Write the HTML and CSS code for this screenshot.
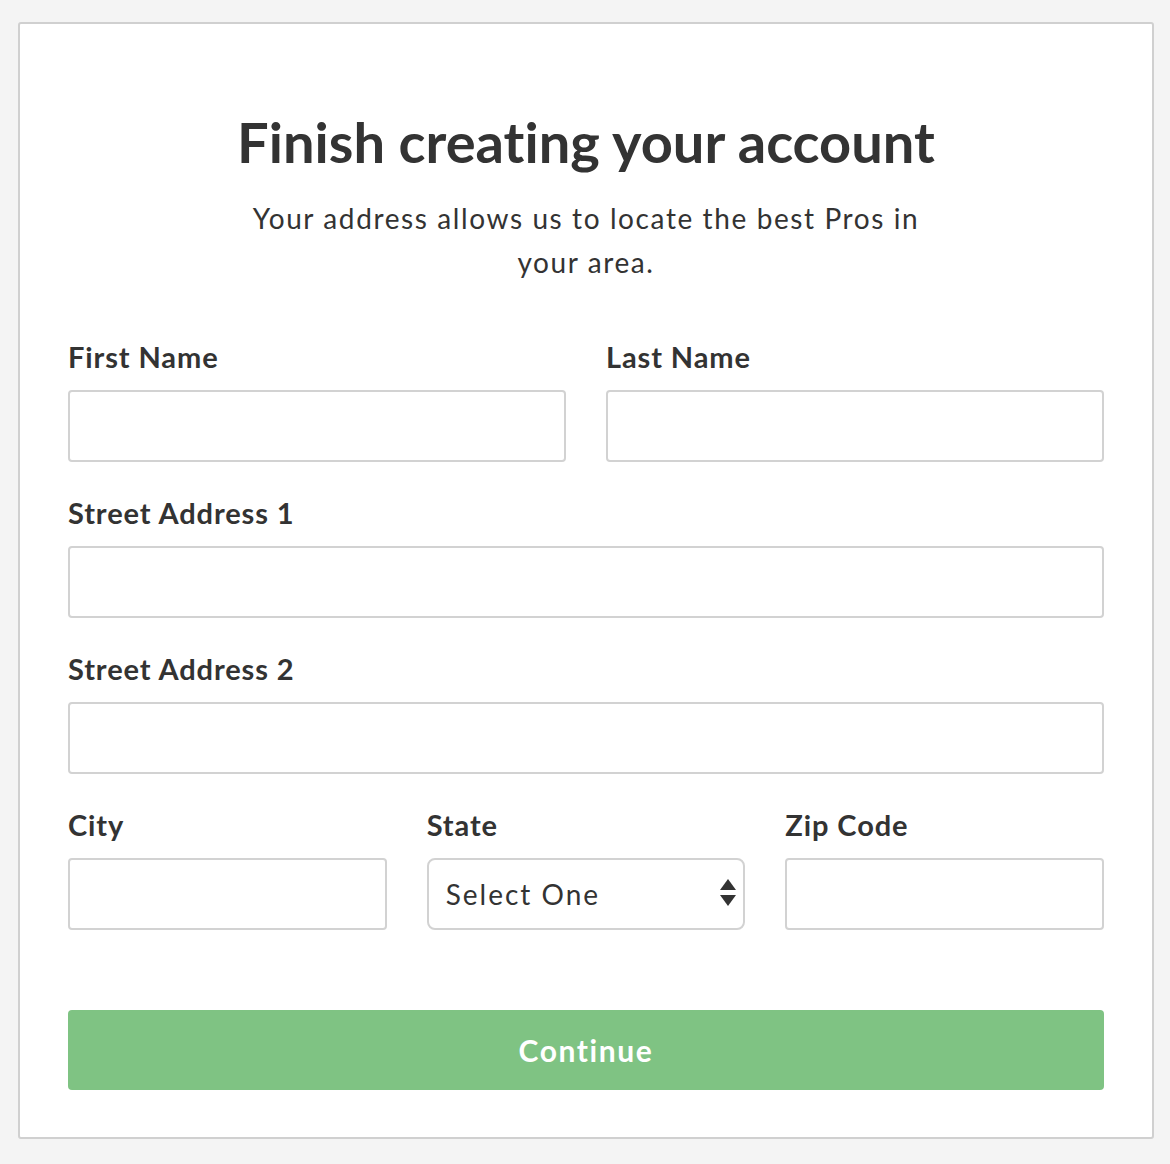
FILE: index.html
```html
<!DOCTYPE html>
<html lang="en">
<head>
<meta charset="utf-8">
<title>Finish creating your account</title>
<link rel="stylesheet" href="styles.css">
</head>
<body>
<main class="card">
  <h1 class="title">Finish creating your account</h1>
  <p class="subtitle">Your address allows us to locate the best Pros in your area.</p>
  <form class="form">
    <div class="row">
      <div class="field">
        <label class="label" for="fn">First Name</label>
        <input class="input" id="fn" type="text">
      </div>
      <div class="field">
        <label class="label" for="ln">Last Name</label>
        <input class="input" id="ln" type="text">
      </div>
    </div>
    <div class="row">
      <div class="field">
        <label class="label" for="a1">Street Address 1</label>
        <input class="input" id="a1" type="text">
      </div>
    </div>
    <div class="row">
      <div class="field">
        <label class="label" for="a2">Street Address 2</label>
        <input class="input" id="a2" type="text">
      </div>
    </div>
    <div class="row">
      <div class="field">
        <label class="label" for="city">City</label>
        <input class="input" id="city" type="text">
      </div>
      <div class="field">
        <label class="label" for="state">State</label>
        <div class="select-wrap">
          <select class="select" id="state">
            <option>Select One</option>
          </select>
          <svg class="select-arrows" width="16" height="28" viewBox="0 0 16 28" aria-hidden="true">
            <polygon points="8,0 16,11 0,11" fill="#333"/>
            <polygon points="0,16 16,16 8,27" fill="#333"/>
          </svg>
        </div>
      </div>
      <div class="field">
        <label class="label" for="zip">Zip Code</label>
        <input class="input" id="zip" type="text">
      </div>
    </div>
    <button class="button" type="button">Continue</button>
  </form>
</main>
</body>
</html>
```

FILE: styles.css
```css
html, body {
  margin: 0;
  padding: 0;
}

body {
  background: #f4f4f4;
  font-family: "Lato", "Open Sans", sans-serif;
  font-variant-ligatures: none;
  color: #333333;
  padding: 22px 16px 25px 18px;
}

.card {
  background: #ffffff;
  border: 2px solid #d0d0d0;
  border-radius: 3px;
  padding: 86px 48px 47px 48px;
}

.title {
  margin: 0;
  font-size: 56px;
  line-height: 64px;
  font-weight: 700;
  text-align: center;
  color: #333333;
}

.subtitle {
  margin: 22px auto 0;
  max-width: 700px;
  font-size: 28px;
  line-height: 44px;
  font-weight: 400;
  letter-spacing: 1.6px;
  text-align: center;
  color: #333333;
}

.form {
  margin-top: 57px;
  display: flex;
  flex-direction: column;
}

.row {
  display: flex;
  gap: 40px;
  margin-bottom: 35px;
}

.row:nth-child(4) {
  margin-bottom: 0;
}

.field {
  flex: 1 1 0;
  min-width: 0;
  display: flex;
  flex-direction: column;
}

.label {
  display: block;
  font-size: 29px;
  line-height: 32px;
  font-weight: 700;
  letter-spacing: 0.9px;
  color: #333333;
  margin-bottom: 17px;
}

.input,
.select {
  box-sizing: border-box;
  width: 100%;
  height: 72px;
  border: 2px solid #d2d2d2;
  border-radius: 4px;
  background: #ffffff;
  font-family: inherit;
  font-variant-ligatures: none;
  font-size: 28px;
  letter-spacing: 2px;
  color: #333333;
  padding: 0 17px;
  margin: 0;
  outline: none;
}

.select-wrap {
  position: relative;
}

.select {
  -webkit-appearance: none;
  appearance: none;
  border-radius: 8px;
}

.select-arrows {
  position: absolute;
  right: 9px;
  top: 21px;
  pointer-events: none;
}

.button {
  margin-top: 80px;
  height: 80px;
  width: 100%;
  border: 0;
  border-radius: 4px;
  background: #7fc383;
  color: #ffffff;
  font-family: inherit;
  font-variant-ligatures: none;
  font-size: 30px;
  font-weight: 700;
  letter-spacing: 1.6px;
  cursor: pointer;
}
```
